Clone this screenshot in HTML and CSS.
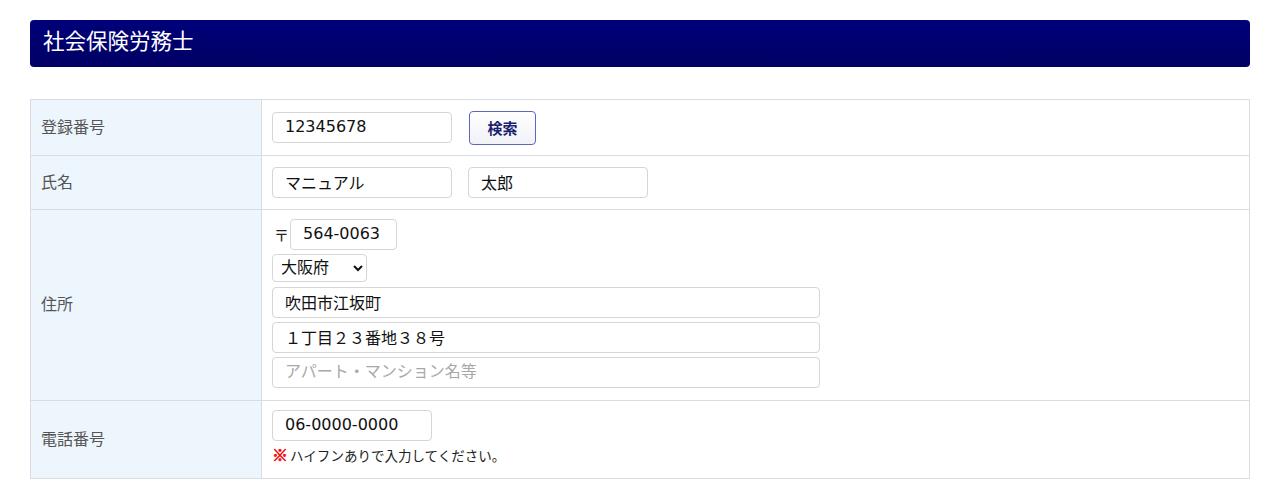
FILE: index.html
```html
<!DOCTYPE html>
<html lang="ja">
<head>
    <meta charset="UTF-8">
    <meta name="viewport" content="width=device-width, initial-scale=1.0">
    <title>社会保険労務士</title>
    <link rel="stylesheet" href="styles.css">
</head>
<body>

    <div class="container">
        <h2 class="section-title">社会保険労務士</h2>

        <table class="form-table">
            <tr class="row-number">
                <th>登録番号</th>
                <td>
                    <div class="line">
                        <input type="text" class="input-short" value="12345678">
                        <button type="button" class="btn-search">検索</button>
                    </div>
                </td>
            </tr>
            <tr class="row-name">
                <th>氏名</th>
                <td>
                    <div class="line">
                        <input type="text" class="input-short" value="マニュアル">
                        <input type="text" class="input-short" value="太郎">
                    </div>
                </td>
            </tr>
            <tr class="row-address">
                <th>住所</th>
                <td>
                    <div class="address">
                        <div class="zip">
                            <span class="zip-mark">〒</span>
                            <input type="text" class="input-zip" value="564-0063">
                        </div>
                        <select class="pref">
                            <option>大阪府</option>
                        </select>
                        <input type="text" class="input-long" value="吹田市江坂町">
                        <input type="text" class="input-long" value="１丁目２３番地３８号">
                        <input type="text" class="input-long" placeholder="アパート・マンション名等">
                    </div>
                </td>
            </tr>
            <tr class="row-tel">
                <th>電話番号</th>
                <td>
                    <input type="text" class="input-tel" value="06-0000-0000">
                    <p class="note"><span class="mark">※</span>ハイフンありで入力してください。</p>
                </td>
            </tr>
        </table>
    </div>

</body>
</html>
```

FILE: styles.css
```css
body {
    font-family: 'DejaVu Sans', 'Noto Sans CJK JP', sans-serif;
    margin: 0;
    padding: 0;
    background: #fff;
    color: #222;
}

.container {
    padding: 20px 30px;
}

/* Section heading */
.section-title {
    margin: 0 0 32px;
    height: 47px;
    line-height: 44px;
    padding: 0 13px;
    font-size: 21.5px;
    font-weight: normal;
    color: #fff;
    background: linear-gradient(to bottom, #00007a, #000064);
    border-radius: 4px;
}

/* Form table */
.form-table {
    width: 100%;
    border-collapse: collapse;
    border: 1px solid #d9dde2;
}

.form-table th,
.form-table td {
    border: 1px solid #d9dde2;
    padding: 0 10px;
    vertical-align: middle;
}

.form-table th {
    width: 210px;
    padding-bottom: 4px;
    text-align: left;
    font-size: 16px;
    font-weight: normal;
    color: #555;
    background: #edf5fd;
}

.row-number { height: 56px; }
.row-name { height: 54px; }
.row-address { height: 191px; }
.row-tel { height: 78px; }

.row-address td {
    padding-bottom: 3px;
}

.form-table .row-tel td {
    vertical-align: top;
    padding-top: 9px;
    padding-bottom: 0;
}

.line {
    display: flex;
    align-items: center;
    gap: 16px;
}

input,
select {
    font-family: inherit;
    font-size: 16px;
    color: #111;
    height: 31px;
    box-sizing: border-box;
    border: 1px solid #d6d6d6;
    border-radius: 4px;
    padding: 0 12px 2px;
    background: #fff;
    outline: none;
}

input::placeholder {
    color: #a8a8a8;
}

.input-short { width: 180px; }
.input-zip { width: 107px; }
.input-long { width: 548px; }
.input-tel { width: 160px; display: block; }

/* Search button */
.btn-search {
    font-family: 'Noto Sans CJK JP', sans-serif;
    font-size: 15px;
    font-weight: bold;
    color: #1a1f6e;
    width: 67px;
    height: 34px;
    margin-left: 1px;
    background: linear-gradient(to bottom, #ffffff, #f1f2f7);
    border: 1px solid #5a68c0;
    border-radius: 4px;
    cursor: pointer;
}

/* Address block */
.address {
    display: flex;
    flex-direction: column;
    align-items: flex-start;
    gap: 4px;
}

.zip {
    display: flex;
    align-items: center;
    gap: 1px;
}

.zip-mark {
    font-family: 'Noto Sans CJK JP', sans-serif;
    font-size: 15px;
    padding-left: 2px;
}

.pref {
    width: 95px;
    height: 28px;
    padding: 0 4px 1px;
    margin-bottom: 1px;
}

.note {
    margin: 5px 0 0;
    font-size: 13.5px;
    line-height: 18px;
    color: #222;
}

.note .mark {
    font-family: 'Noto Sans CJK JP', sans-serif;
    color: #f01010;
    font-weight: 900;
    font-size: 16px;
    line-height: 1;
    margin-right: 2px;
    -webkit-text-stroke: 0.6px #f01010;
}
```
